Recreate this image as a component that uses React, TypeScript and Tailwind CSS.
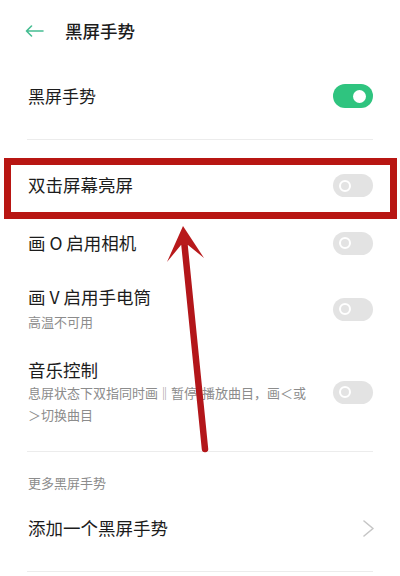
import React from "react";

const font = { fontFamily: '"Noto Sans CJK SC", "Noto Sans", sans-serif' };

function Toggle({ on = false }: { on?: boolean }) {
  return on ? (
    <div className="flex h-[24px] w-[40px] shrink-0 items-center justify-end rounded-full bg-[#2fc47f] pr-[7px]">
      <div className="h-[13px] w-[13px] rounded-full bg-white" />
    </div>
  ) : (
    <div className="flex h-[23px] w-[40px] shrink-0 items-center rounded-full bg-[#e3e3e3] pl-[6px]">
      <div className="h-[12px] w-[12px] rounded-full border-[2.5px] border-white" />
    </div>
  );
}

function Divider() {
  return <div className="mx-[27px] h-px bg-[#ececec]" />;
}

export default function App() {
  return (
    <div className="relative h-[576px] w-[400px] overflow-hidden bg-white text-[#1c1c1c]" style={font}>
      {/* header */}
      <div className="flex h-[62px] items-center pl-[25px]">
        <svg width="19" height="12" viewBox="0 0 19 12" fill="none" stroke="#45bd92" strokeWidth="1.6" strokeLinecap="round" strokeLinejoin="round">
          <path d="M18 6H1.5M6.5 1L1.5 6l5 5" />
        </svg>
        <span className="ml-[21px] text-[17.5px] font-medium">黑屏手势</span>
      </div>

      <div className="flex h-[68px] items-center justify-between pl-[28px] pr-[27px]">
        <span className="text-[17px]">黑屏手势</span>
        <Toggle on />
      </div>
      <div className="h-[9px]" />
      <Divider />

      <div className="h-[17px]" />
      <div className="flex h-[57px] items-center justify-between pl-[28px] pr-[27px]">
        <span className="text-[17.5px]">双击屏幕亮屏</span>
        <Toggle />
      </div>
      <div className="flex h-[58px] items-center justify-between pl-[28px] pr-[27px]">
        <span className="text-[17.5px]">画 O 启用相机</span>
        <Toggle />
      </div>

      <div className="flex items-center justify-between pb-[12px] pl-[28px] pr-[27px] pt-[13px]">
        <div className="flex flex-col">
          <span className="text-[17.5px] leading-[24px]">画 V 启用手电筒</span>
          <span className="mt-[2px] text-[13px] leading-[22px] text-[#8c8c8c]">高温不可用</span>
        </div>
        <Toggle />
      </div>

      <div className="flex items-center justify-between pb-[25px] pl-[28px] pr-[27px] pt-[13px]">
        <div className="flex w-[285px] flex-col">
          <span className="text-[17.5px] leading-[24px]">音乐控制</span>
          <span className="text-[13px] leading-[22px] text-[#8c8c8c]">
            息屏状态下双指同时画‖暂停/播放曲目，画＜或＞切换曲目
          </span>
        </div>
        <Toggle />
      </div>
      <Divider />

      <div className="h-[50px] pl-[28px] pt-[21px]">
        <div className="text-[13px] leading-[20px] text-[#8c8c8c]">更多黑屏手势</div>
      </div>
      <div className="flex h-[52px] items-center justify-between pl-[28px] pr-[25px]">
        <span className="text-[17.5px]">添加一个黑屏手势</span>
        <svg width="13" height="17" viewBox="0 0 13 17" fill="none" stroke="#c6c6c6" strokeWidth="1.6" strokeLinecap="round" strokeLinejoin="round">
          <path d="M2 1l9 7.5L2 16" />
        </svg>
      </div>
      <div className="h-[17px]" />
      <Divider />

      {/* annotation */}
      <div className="pointer-events-none absolute left-[4px] top-[158px] h-[61px] w-[393px] border-[7px] border-[#b81613]" />
      <svg className="pointer-events-none absolute left-0 top-0" width="400" height="576" viewBox="0 0 400 576">
        <line x1="184" y1="240" x2="205" y2="449" stroke="#b3161a" strokeWidth="6.5" strokeLinecap="round" />
        <polygon points="183,226 204,258 188,245 181,245 167,262" fill="#b81a1c" />
      </svg>
    </div>
  );
}
